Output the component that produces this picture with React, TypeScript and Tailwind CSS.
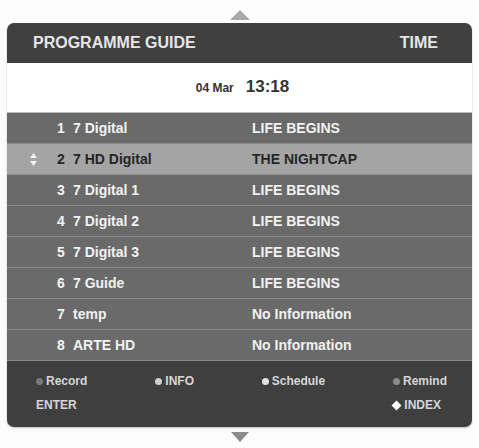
import React from "react";

const rows = [
  { n: "1", name: "7 Digital", prog: "LIFE BEGINS" },
  { n: "2", name: "7 HD Digital", prog: "THE NIGHTCAP", sel: true },
  { n: "3", name: "7 Digital 1", prog: "LIFE BEGINS" },
  { n: "4", name: "7 Digital 2", prog: "LIFE BEGINS" },
  { n: "5", name: "7 Digital 3", prog: "LIFE BEGINS" },
  { n: "6", name: "7 Guide", prog: "LIFE BEGINS" },
  { n: "7", name: "temp", prog: "No Information" },
  { n: "8", name: "ARTE HD", prog: "No Information" },
];

function Dot({ c }: { c: string }) {
  return <span className={`inline-block w-[7px] h-[7px] rounded-full ${c}`} />;
}

export default function App() {
  return (
    <div
      className="w-[479px] h-[448px] bg-[#fcfcfc] flex flex-col items-center"
      style={{ fontFamily: '"Liberation Sans", Arial, sans-serif' }}
    >
      <div className="h-[23px] w-full flex items-start justify-center pt-[10px]">
        <svg width="20" height="10" viewBox="0 0 20 10">
          <polygon points="10,0 20,10 0,10" fill="#a8a8a8" />
        </svg>
      </div>
      <div className="w-[465px] rounded-[7px] overflow-hidden shadow-[0_1px_2px_rgba(0,0,0,0.25)] flex flex-col">
        <div className="h-[40px] bg-[#404040] flex items-center justify-between pl-[26px] pr-[34px] text-[16px] font-bold text-[#e6e6e6]">
          <span>PROGRAMME GUIDE</span>
          <span>TIME</span>
        </div>
        <div className="h-[50px] bg-white border-b border-[#bdbdbd] flex items-center justify-center gap-[12px] font-bold text-[#333] pl-[6px] pb-[2px]">
          <span className="text-[12px] mt-[3px]">04 Mar</span>
          <span className="text-[17px]">13:18</span>
        </div>
        <div className="flex flex-col">
          {rows.map((r) => (
            <div
              key={r.n}
              className={`h-[31px] flex items-center border-b border-[#8c8c8c] text-[14px] font-bold ${
                r.sel ? "bg-[#a4a4a4] text-[#262626]" : "bg-[#6a6a6a] text-[#f2f2f2]"
              }`}
            >
              <div className="w-[50px] flex justify-center pl-[2px]">
                {r.sel && (
                  <svg width="7" height="13" viewBox="0 0 7 13">
                    <polygon points="3.5,0 7,5 0,5" fill="#f2f2f2" />
                    <polygon points="0,8 7,8 3.5,13" fill="#f2f2f2" />
                  </svg>
                )}
              </div>
              <span className="w-[16px]">{r.n}</span>
              <span className="w-[179px]">{r.name}</span>
              <span>{r.prog}</span>
            </div>
          ))}
        </div>
        <div className="h-[66px] bg-[#3f3f3f] text-[#d6d6d6] text-[12px] font-bold pl-[29px] pr-[25px] pt-[12px] flex flex-col gap-[8px]">
          <div className="flex items-center h-[16px]">
            <div className="w-[120px] flex items-center gap-[3px]">
              <Dot c="bg-[#7a7a7a]" />
              <span>Record</span>
            </div>
            <div className="w-[107px] flex items-center gap-[3px]">
              <Dot c="bg-[#cfcfcf]" />
              <span>INFO</span>
            </div>
            <div className="w-[132px] flex items-center gap-[3px]">
              <Dot c="bg-[#e0e0e0]" />
              <span>Schedule</span>
            </div>
            <div className="flex items-center gap-[3px]">
              <Dot c="bg-[#8a8a8a]" />
              <span>Remind</span>
            </div>
          </div>
          <div className="flex items-center justify-between h-[16px] pr-[6px]">
            <span>ENTER</span>
            <div className="flex items-center gap-[4px]">
              <span className="inline-block w-[7px] h-[7px] bg-white rotate-45" />
              <span>INDEX</span>
            </div>
          </div>
        </div>
      </div>
      <div className="w-full flex justify-center pt-[5px]">
        <svg width="18" height="10" viewBox="0 0 18 10">
          <polygon points="0,0 18,0 9,10" fill="#8c8c8c" />
        </svg>
      </div>
    </div>
  );
}
